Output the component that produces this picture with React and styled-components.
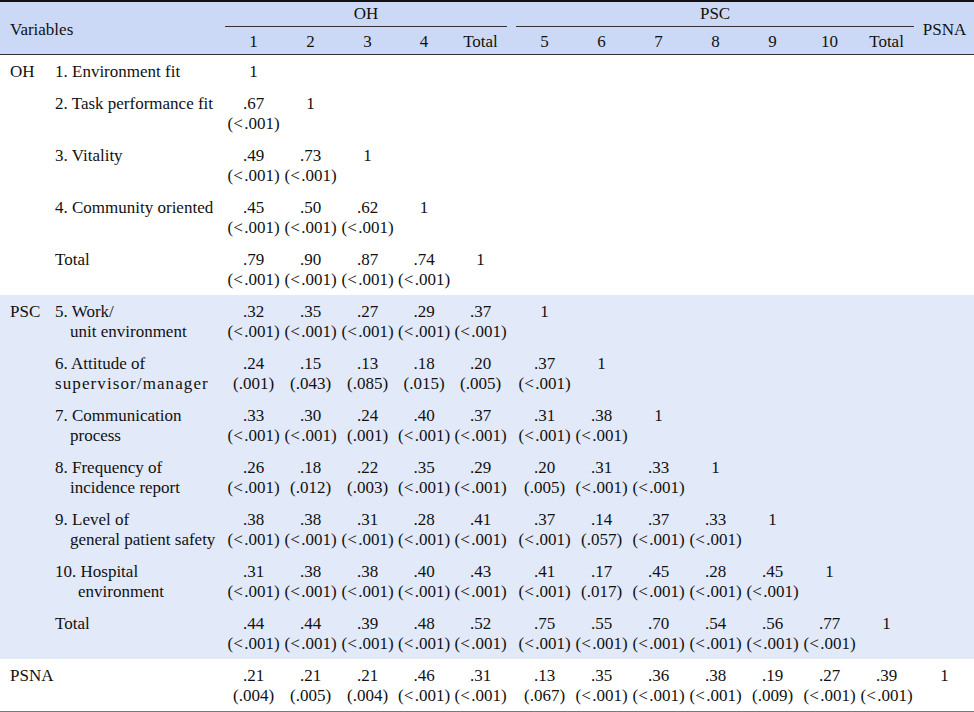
import React from 'react';
import styled, { createGlobalStyle } from 'styled-components';

const GlobalStyle = createGlobalStyle`
  html, body {
    margin: 0;
    padding: 0;
    background: #fff;
  }
  body {
    font-family: "Liberation Serif", "Times New Roman", serif;
    color: #111;
  }
`;

// column widths in px: group, label, OH 1-4 + Total, PSC 5-10 + Total, PSNA
const WIDTHS = [48, 177, 57, 57, 57, 56, 57, 64, 57, 57, 57, 57, 57, 57, 59];

const LT = '(<\u200a.001)';
const c = (r, p = '<') => [r, p === '<' ? LT : `(${p})`];

const OH_ROWS = [
  { group: 'OH', label: ['1. Environment fit'], cells: ['1'] },
  { label: ['2. Task performance fit'], cells: [c('.67'), '1'] },
  { label: ['3. Vitality'], cells: [c('.49'), c('.73'), '1'] },
  { label: ['4. Community oriented'], cells: [c('.45'), c('.50'), c('.62'), '1'] },
  { label: ['Total'], cells: [c('.79'), c('.90'), c('.87'), c('.74'), '1'] },
];

const PSC_ROWS = [
  {
    group: 'PSC', label: ['5. Work/', 'unit environment'], indent: 15,
    cells: [c('.32'), c('.35'), c('.27'), c('.29'), c('.37'), '1'],
  },
  {
    label: ['6. Attitude of', 'supervisor/manager'], indent: 0, spread: true,
    cells: [c('.24', '.001'), c('.15', '.043'), c('.13', '.085'), c('.18', '.015'), c('.20', '.005'), c('.37'), '1'],
  },
  {
    label: ['7. Communication', 'process'], indent: 15,
    cells: [c('.33'), c('.30'), c('.24', '.001'), c('.40'), c('.37'), c('.31'), c('.38'), '1'],
  },
  {
    label: ['8. Frequency of', 'incidence report'], indent: 15,
    cells: [c('.26'), c('.18', '.012'), c('.22', '.003'), c('.35'), c('.29'), c('.20', '.005'), c('.31'), c('.33'), '1'],
  },
  {
    label: ['9. Level of', 'general patient safety'], indent: 15,
    cells: [c('.38'), c('.38'), c('.31'), c('.28'), c('.41'), c('.37'), c('.14', '.057'), c('.37'), c('.33'), '1'],
  },
  {
    label: ['10. Hospital', 'environment'], indent: 23,
    cells: [c('.31'), c('.38'), c('.38'), c('.40'), c('.43'), c('.41'), c('.17', '.017'), c('.45'), c('.28'), c('.45'), '1'],
  },
  {
    label: ['Total'],
    cells: [c('.44'), c('.44'), c('.39'), c('.48'), c('.52'), c('.75'), c('.55'), c('.70'), c('.54'), c('.56'), c('.77'), '1'],
  },
];

const PSNA_ROW = {
  group: 'PSNA', label: [],
  cells: [
    c('.21', '.004'), c('.21', '.005'), c('.21', '.004'), c('.46'), c('.31'),
    c('.13', '.067'), c('.35'), c('.36'), c('.38'), c('.19', '.009'), c('.27'), c('.39'), '1',
  ],
};

const Table = styled.table`
  width: 974px;
  border-collapse: collapse;
  table-layout: fixed;
  font-size: 17px;
  line-height: 20px;
  border-top: 2px solid #111;
  border-bottom: 2px solid #7a7a7a;
`;

const Head = styled.thead`
  background: #ccd9f6;
  border-bottom: 1px solid #333;
`;

const Th = styled.th`
  font-weight: normal;
  text-align: ${(p) => p.$align || 'center'};
  vertical-align: ${(p) => p.$valign || 'top'};
  padding: ${(p) => p.$pad || '5px 0 2px'};
  padding-left: ${(p) => (p.$lead ? '7px' : p.$indent || '0')};
`;

const Rule = styled.div`
  border-bottom: 1px solid #333;
  padding-bottom: 2px;
  margin-left: ${(p) => p.$ml || 0}px;
  margin-right: ${(p) => p.$mr || 0}px;
`;

const Body = styled.tbody`
  background: ${(p) => (p.$shade ? '#e2e9f9' : '#fff')};
`;

const Td = styled.td`
  padding: 7px 0 5px;
  vertical-align: top;
  text-align: center;
  white-space: nowrap;
  padding-left: ${(p) => (p.$lead ? '7px' : '0')};
`;

const GroupCell = styled(Td)`
  text-align: left;
  padding-left: 10px;
`;

const LabelCell = styled(Td)`
  text-align: left;
  padding-left: 7px;
`;

const LabelLine = styled.div`
  padding-left: ${(p) => p.$indent || 0}px;
  letter-spacing: ${(p) => (p.$spread ? '1.1px' : 'normal')};
`;

const Row = ({ row }) => {
  const cells = Array.from({ length: 13 }, (_, i) => row.cells[i] || null);
  return (
    <tr>
      <GroupCell colSpan={row.label.length ? 1 : 2}>{row.group || ''}</GroupCell>
      {row.label.length > 0 && (
        <LabelCell>
          {row.label.map((line, i) => (
            <LabelLine key={i} $indent={i > 0 ? row.indent : 0} $spread={i > 0 && row.spread}>
              {line}
            </LabelLine>
          ))}
        </LabelCell>
      )}
      {cells.map((cell, i) => (
        <Td key={i} $lead={i === 5}>
          {Array.isArray(cell) ? (
            <>
              {cell[0]}
              <br />
              {cell[1]}
            </>
          ) : (
            cell
          )}
        </Td>
      ))}
    </tr>
  );
};

export default function App() {
  return (
    <>
      <GlobalStyle />
      <Table>
        <colgroup>
          {WIDTHS.map((w, i) => (
            <col key={i} style={{ width: w }} />
          ))}
        </colgroup>
        <Head>
          <tr>
            <Th colSpan={2} rowSpan={2} $align="left" $valign="middle" $pad="3px 0 0" $indent="10px">
              Variables
            </Th>
            <Th colSpan={5} $pad="2px 0 0">
              <Rule $mr={2}>OH</Rule>
            </Th>
            <Th colSpan={7} $pad="2px 0 0">
              <Rule $ml={7} $mr={1}>PSC</Rule>
            </Th>
            <Th rowSpan={2} $valign="middle" $pad="3px 0 0">
              PSNA
            </Th>
          </tr>
          <tr>
            {['1', '2', '3', '4', 'Total', '5', '6', '7', '8', '9', '10', 'Total'].map((h, i) => (
              <Th key={i} $lead={i === 5}>
                {h}
              </Th>
            ))}
          </tr>
        </Head>
        <Body>
          {OH_ROWS.map((row, i) => (
            <Row key={i} row={row} />
          ))}
        </Body>
        <Body $shade>
          {PSC_ROWS.map((row, i) => (
            <Row key={i} row={row} />
          ))}
        </Body>
        <Body>
          <Row row={PSNA_ROW} />
        </Body>
      </Table>
    </>
  );
}
